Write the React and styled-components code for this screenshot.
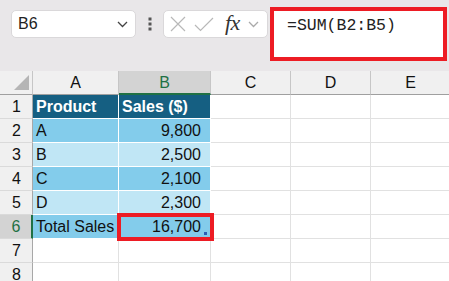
import React from "react";
import styled, { createGlobalStyle } from "styled-components";

const Global = createGlobalStyle`
  html, body { margin: 0; padding: 0; }
  body {
    width: 449px;
    height: 281px;
    overflow: hidden;
    background: #fff;
    font-family: "Liberation Sans", Arial, sans-serif;
  }
`;

const Toolbar = styled.div`
  height: 71px;
  box-sizing: border-box;
  background: #e9e7e9;
  display: flex;
  align-items: flex-start;
  padding: 10px 0 0 11px;
`;

const NameBox = styled.div`
  width: 125px;
  height: 28px;
  box-sizing: border-box;
  background: #fff;
  border: 1px solid #dad8da;
  border-radius: 5px;
  display: flex;
  align-items: center;
  justify-content: space-between;
  padding: 0 7px 0 6px;
  font-size: 16px;
  color: #222;
`;

const Dots = styled.div`
  width: 27px;
  height: 28px;
  display: flex;
  align-items: center;
  justify-content: center;
`;

const Buttons = styled.div`
  width: 105px;
  height: 28px;
  box-sizing: border-box;
  background: #fff;
  border: 1px solid #dad8da;
  border-radius: 5px;
  display: flex;
  align-items: center;
  padding-left: 6px;
  gap: 8px;
`;

const Fx = styled.span`
  font-family: "Liberation Serif", "DejaVu Serif", serif;
  font-style: italic;
  font-size: 22px;
  color: #333;
  margin: -3px 0 0 3px;
  letter-spacing: -0.5px;
`;

const FormulaField = styled.div`
  margin: -3px 0 0 2px;
  width: 177px;
  height: 54px;
  box-sizing: border-box;
  background: #fff;
  border: 4px solid #ed1c24;
  padding: 5px 0 0 13px;
  font-family: "Liberation Mono", "DejaVu Sans Mono", monospace;
  font-size: 16.5px;
  color: #222;
`;

const Sheet = styled.div`
  display: grid;
  grid-template-columns: 33px 86px 92px 80px 80px 80px;
  grid-auto-rows: 24px;
  font-size: 16px;
`;

const Cell = styled.div`
  position: relative;
  box-sizing: border-box;
  border-right: 1px solid ${(p) => (p.$table ? "#fff" : "#e1e1e1")};
  border-bottom: 1px solid ${(p) => (p.$table ? "#fff" : "#e1e1e1")};
  background: ${(p) => p.$bg || "#fff"};
  color: ${(p) => p.$color || "#111"};
  font-weight: ${(p) => (p.$bold ? 700 : 400)};
  display: flex;
  align-items: center;
  justify-content: ${(p) => (p.$right ? "flex-end" : "flex-start")};
  padding: 0 ${(p) => (p.$right ? "9px" : "3px")};
  white-space: nowrap;
  overflow: visible;
  z-index: ${(p) => (p.$selected ? 2 : "auto")};
`;

const ColHead = styled.div`
  box-sizing: border-box;
  background: ${(p) => (p.$active ? "#d3d3d3" : "#f0f0f0")};
  border-right: 1px solid #c6c6c6;
  border-bottom: ${(p) => (p.$active ? "2px solid #1f7145" : "1px solid #9f9f9f")};
  color: ${(p) => (p.$active ? "#1f7145" : "#111")};
  display: flex;
  align-items: center;
  justify-content: center;
  padding-top: 1px;
`;

const RowHead = styled.div`
  box-sizing: border-box;
  background: ${(p) => (p.$active ? "#d3d3d3" : "#f0f0f0")};
  border-right: ${(p) => (p.$active ? "2px solid #1f7145" : "1px solid #a8a8a8")};
  border-bottom: 1px solid #dadada;
  color: ${(p) => (p.$active ? "#1f7145" : "#111")};
  display: flex;
  align-items: center;
  justify-content: center;
  padding-left: 1px;
`;

const Corner = styled.div`
  box-sizing: border-box;
  background: #f0f0f0;
  border-right: 1px solid #c6c6c6;
  border-bottom: 1px solid #9f9f9f;
  display: flex;
  align-items: flex-end;
  justify-content: flex-end;
  padding: 0 3px 4px 0;
`;

const Highlight = styled.div`
  position: absolute;
  left: -2px;
  top: -2px;
  right: -4px;
  bottom: -3px;
  border: 4px solid #ed1c24;
  pointer-events: none;
`;

const Handle = styled.div`
  position: absolute;
  right: 3px;
  bottom: 3px;
  width: 3px;
  height: 3px;
  background: #2b5fb4;
`;

const HEAD_BG = "#155f82";
const DARK = "#83cceb";
const LIGHT = "#c0e6f5";

const rows = [
  ["A", "9,800"],
  ["B", "2,500"],
  ["C", "2,100"],
  ["D", "2,300"],
];

const Chevron = ({ color = "#444" }) => (
  <svg width="11" height="7" viewBox="0 0 11 7">
    <path d="M1 1l4.5 4.5L10 1" fill="none" stroke={color} strokeWidth="1.3" />
  </svg>
);

const Empty = ({ n }) => (
  <>
    <RowHead>{n}</RowHead>
    <Cell />
    <Cell />
    <Cell />
    <Cell />
    <Cell />
  </>
);

export default function App() {
  return (
    <>
      <Global />
      <Toolbar>
        <NameBox>
          <span>B6</span>
          <Chevron />
        </NameBox>
        <Dots>
          <svg width="4" height="14" viewBox="0 0 4 14">
            <rect x="0.5" y="0.5" width="3" height="3" fill="#555" />
            <rect x="0.5" y="5.5" width="3" height="3" fill="#555" />
            <rect x="0.5" y="10.5" width="3" height="3" fill="#555" />
          </svg>
        </Dots>
        <Buttons>
          <svg width="16" height="16" viewBox="0 0 16 16">
            <path d="M1 1l14 14M15 1L1 15" stroke="#b8b8b8" strokeWidth="1.2" fill="none" />
          </svg>
          <svg width="20" height="16" viewBox="0 0 20 16">
            <path d="M1 9l5.5 5.5L19 2" stroke="#b8b8b8" strokeWidth="1.2" fill="none" />
          </svg>
          <Fx>fx</Fx>
          <Chevron color="#aaa" />
        </Buttons>
        <FormulaField>=SUM(B2:B5)</FormulaField>
      </Toolbar>
      <Sheet>
        <Corner>
          <svg width="15" height="15" viewBox="0 0 15 15">
            <path d="M15 0V15H0Z" fill="#b5b5b5" />
          </svg>
        </Corner>
        <ColHead>A</ColHead>
        <ColHead $active>B</ColHead>
        <ColHead>C</ColHead>
        <ColHead>D</ColHead>
        <ColHead>E</ColHead>

        <RowHead>1</RowHead>
        <Cell $table $bg={HEAD_BG} $color="#fff" $bold>Product</Cell>
        <Cell $table $bg={HEAD_BG} $color="#fff" $bold>Sales ($)</Cell>
        <Cell />
        <Cell />
        <Cell />

        {rows.map(([name, value], i) => {
          const bg = i % 2 === 0 ? DARK : LIGHT;
          return (
            <React.Fragment key={name}>
              <RowHead>{i + 2}</RowHead>
              <Cell $table $bg={bg}>{name}</Cell>
              <Cell $table $bg={bg} $right>{value}</Cell>
              <Cell />
              <Cell />
              <Cell />
            </React.Fragment>
          );
        })}

        <RowHead $active>6</RowHead>
        <Cell $table $bg={DARK}>Total Sales</Cell>
        <Cell $table $bg={DARK} $right $selected>
          16,700
          <Handle />
          <Highlight />
        </Cell>
        <Cell />
        <Cell />
        <Cell />

        <Empty n={7} />
        <Empty n={8} />
      </Sheet>
    </>
  );
}
